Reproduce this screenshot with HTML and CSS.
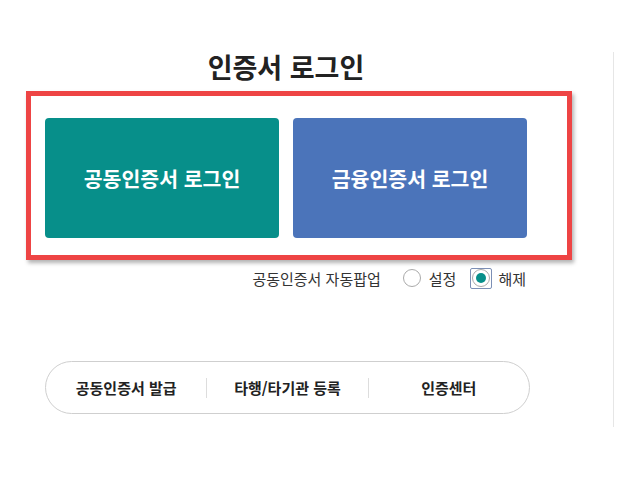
FILE: index.html
```html
<!DOCTYPE html>
<html lang="ko">
<head>
<meta charset="utf-8">
<title>인증서 로그인</title>
<link rel="stylesheet" href="styles.css">
</head>
<body>
<div class="page">
  <main class="login">
    <h1 class="title">인증서 로그인</h1>
    <div class="cert-buttons">
      <button class="cert-btn joint" type="button">공동인증서 로그인</button>
      <button class="cert-btn finance" type="button">금융인증서 로그인</button>
      <div class="highlight"></div>
    </div>
    <div class="popup-row">
      <span class="popup-label">공동인증서 자동팝업</span>
      <label class="opt"><span class="radio"></span><span>설정</span></label>
      <label class="opt"><span class="focus-ring"><span class="radio checked"></span></span><span>해제</span></label>
    </div>
    <nav class="links">
      <a class="link">공동인증서 발급</a>
      <span class="sep"></span>
      <a class="link">타행/타기관 등록</a>
      <span class="sep"></span>
      <a class="link">인증센터</a>
    </nav>
  </main>
  <aside class="side"></aside>
</div>
</body>
</html>
```
FILE: styles.css
```css
* { box-sizing: border-box; }
html, body { margin: 0; padding: 0; background: #fff; }
body {
  font-family: "Noto Sans CJK KR", "Noto Sans", sans-serif;
  color: #222;
}
.page {
  display: flex;
  align-items: flex-start;
  padding-left: 45px;
}
.login {
  width: 485px;
  display: flex;
  flex-direction: column;
  padding-top: 49px;
}
.title {
  margin: 0;
  width: 482px;
  text-align: center;
  font-size: 27px;
  line-height: 36px;
  font-weight: 700;
  color: #222;
}
.cert-buttons {
  position: relative;
  margin-top: 33px;
  display: grid;
  grid-template-columns: 234px 234px;
  gap: 14px;
}
.cert-btn {
  height: 120px;
  border: 0;
  border-radius: 4px;
  color: #fff;
  font-family: inherit;
  font-size: 20.5px;
  font-weight: 700;
  padding: 0;
}
.cert-btn.joint { background: #078f8a; }
.cert-btn.finance { background: #4b74ba; }
.highlight {
  position: absolute;
  left: -19px;
  top: -27px;
  width: 546px;
  height: 169px;
  border: 5px solid #ee4444;
  box-shadow: 2px 3px 4px rgba(0, 0, 0, 0.3);
  pointer-events: none;
}
.popup-row {
  margin-top: 30px;
  width: 481px;
  height: 20px;
  display: flex;
  align-items: center;
  justify-content: flex-end;
  font-size: 15px;
  color: #333;
}
.popup-label { margin-right: 22px; }
.opt {
  display: flex;
  align-items: center;
  gap: 8px;
}
.opt + .opt { margin-left: 14px; gap: 6px; }
.radio {
  display: block;
  width: 18px;
  height: 18px;
  border: 1px solid #aaa;
  border-radius: 50%;
  background: #fff;
  position: relative;
}
.radio.checked::after {
  content: "";
  position: absolute;
  left: 3px;
  top: 3px;
  width: 10px;
  height: 10px;
  border-radius: 50%;
  background: #078f8a;
}
.focus-ring {
  display: flex;
  align-items: center;
  justify-content: center;
  width: 22px;
  height: 21px;
  border: 1px solid #7c8fb5;
  border-radius: 2px;
}
.links {
  margin-top: 73px;
  width: 485px;
  height: 53px;
  border: 1px solid #cfcfcf;
  border-radius: 27px;
  display: flex;
  align-items: center;
}
.link {
  flex: 1;
  text-align: center;
  font-size: 15px;
  font-weight: 700;
  color: #222;
}
.sep {
  width: 1px;
  height: 20px;
  background: #dddddd;
}
.side {
  margin-left: 83px;
  margin-top: 52px;
  height: 375px;
  border-left: 1px solid #e6e6e6;
}
```
